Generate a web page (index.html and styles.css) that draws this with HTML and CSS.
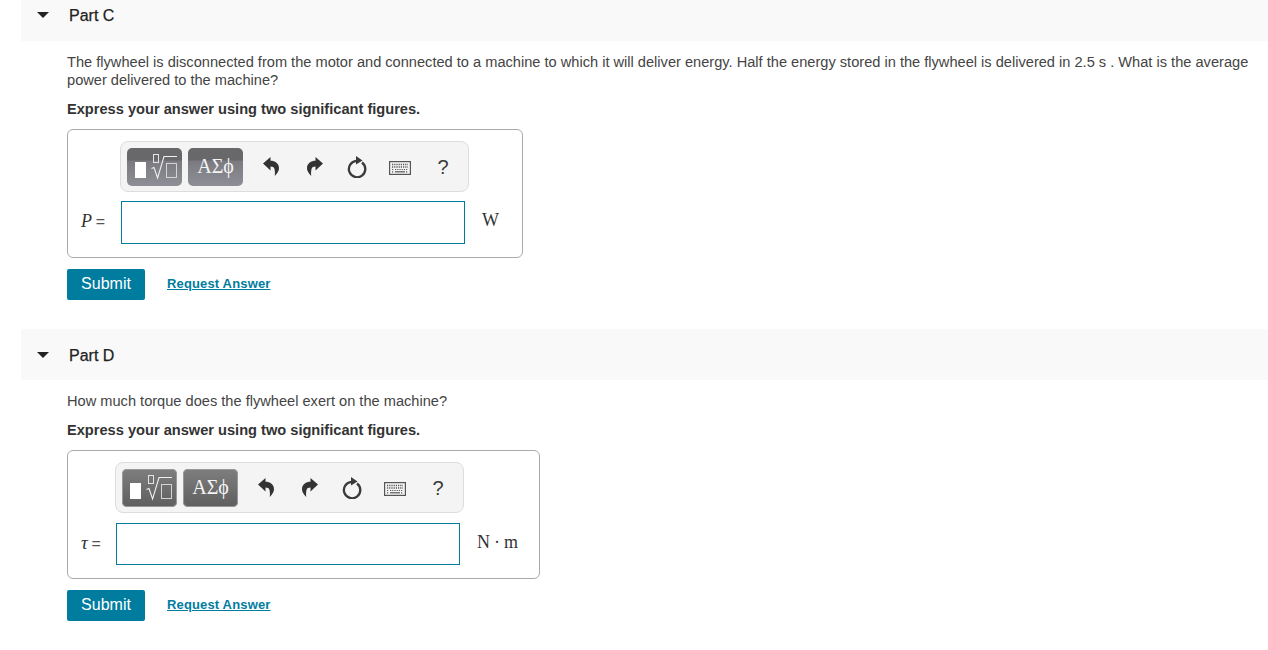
FILE: index.html
```html
<!DOCTYPE html>
<html lang="en">
<head>
<meta charset="utf-8">
<title>Part C and Part D</title>
<link rel="stylesheet" href="styles.css">
</head>
<body>
<svg class="sprite" xmlns="http://www.w3.org/2000/svg">
  <symbol id="i-templates" viewBox="0 0 55 38">
    <rect x="8" y="14" width="11" height="16" fill="#fff"/>
    <rect x="26.500" y="6.500" width="5" height="8" fill="none" stroke="#e4e4e4" stroke-width="1"/>
    <path d="M24.500 20.500l2.500-1 3.600 10.500L37 8.500h13" fill="none" stroke="#f0f0f0" stroke-width="1.100"/>
    <rect x="39.500" y="15.500" width="10" height="14" fill="none" stroke="#d4d4d4" stroke-width="1"/>
  </symbol>
  <symbol id="i-undo" viewBox="0 0 16 19">
    <path d="M7.500 0L0 6.500 7.500 13.500V9.500C9.500 9.500 11 10.200 11.500 12 12 14 12 17 11.800 19 14.800 16 16 13.500 16 11 16 6.500 12 3.800 7.500 3.800Z" fill="#333"/>
  </symbol>
  <symbol id="i-redo" viewBox="0 0 16 19">
    <path d="M8.500 0L16 6.500 8.500 13.500V9.500C6.500 9.500 5 10.200 4.500 12 4 14 4 17 4.200 19 1.200 16 0 13.500 0 11 0 6.500 4 3.800 8.500 3.800Z" fill="#333"/>
  </symbol>
  <symbol id="i-reload" viewBox="0 0 20 22">
    <path d="M9.500 4.900A8.200 8.200 0 1 0 15 6.500" fill="none" stroke="#3a3a3a" stroke-width="2.300"/>
    <path d="M9 0L15.500 4.600 9 8.500Z" fill="#3a3a3a"/>
  </symbol>
  <symbol id="i-keyboard" viewBox="0 0 22 14">
    <rect x="0.600" y="0.600" width="20.800" height="12.800" fill="#f4f4f4" stroke="#555" stroke-width="1.200"/>
    <path d="M3 3.500h16M3 6h16" stroke="#555" stroke-width="1.300" stroke-dasharray="1.200 1" fill="none"/>
    <path d="M3 8.500h2M17 8.500h2M3 10.800h2M17 10.800h2M6 8.500h10" stroke="#555" stroke-width="1.200" stroke-dasharray="1.200 1" fill="none"/>
    <path d="M6 10.800h10" stroke="#555" stroke-width="1.200" fill="none"/>
  </symbol>
</svg>

<main class="page">
  <section class="part">
    <header class="part-head part-head-first">
      <span class="caret"></span>
      <h2 class="part-title">Part C</h2>
    </header>
    <div class="part-body">
      <p class="prompt">The flywheel is disconnected from the motor and connected to a machine to which it will deliver energy. Half the energy stored in the flywheel is delivered in 2.5 s . What is the average power delivered to the machine?</p>
      <p class="hint">Express your answer using two significant figures.</p>
      <div class="answer-box answer-box-c">
        <div class="toolbar">
          <button class="tool-btn tool-btn-split" type="button"><svg class="tool-art"><use href="#i-templates"/></svg></button>
          <button class="tool-btn tool-btn-split tool-greek" type="button">ΑΣϕ</button>
          <span class="tool-slot tool-slot-first"><svg class="ic-arrow"><use href="#i-undo"/></svg></span>
          <span class="tool-slot"><svg class="ic-arrow ic-redo"><use href="#i-redo"/></svg></span>
          <span class="tool-slot"><svg class="ic-reload"><use href="#i-reload"/></svg></span>
          <span class="tool-slot"><svg class="ic-keyboard"><use href="#i-keyboard"/></svg></span>
          <span class="tool-slot tool-help">?</span>
        </div>
        <label class="var-label"><i class="var">P</i> <span class="eq">=</span></label>
        <input class="answer-input" type="text" aria-label="P">
        <span class="unit unit-w">W</span>
      </div>
      <div class="actions">
        <button class="submit" type="button">Submit</button>
        <a class="request" href="#">Request Answer</a>
      </div>
    </div>
  </section>

  <section class="part part-next">
    <header class="part-head">
      <span class="caret"></span>
      <h2 class="part-title">Part D</h2>
    </header>
    <div class="part-body">
      <p class="prompt">How much torque does the flywheel exert on the machine?</p>
      <p class="hint">Express your answer using two significant figures.</p>
      <div class="answer-box answer-box-d">
        <div class="toolbar">
          <button class="tool-btn tool-btn-soft" type="button"><svg class="tool-art"><use href="#i-templates"/></svg></button>
          <button class="tool-btn tool-btn-soft tool-greek" type="button">ΑΣϕ</button>
          <span class="tool-slot tool-slot-first"><svg class="ic-arrow"><use href="#i-undo"/></svg></span>
          <span class="tool-slot"><svg class="ic-arrow ic-redo"><use href="#i-redo"/></svg></span>
          <span class="tool-slot"><svg class="ic-reload"><use href="#i-reload"/></svg></span>
          <span class="tool-slot"><svg class="ic-keyboard"><use href="#i-keyboard"/></svg></span>
          <span class="tool-slot tool-help">?</span>
        </div>
        <label class="var-label"><i class="var var-tau">τ</i> <span class="eq">=</span></label>
        <input class="answer-input" type="text" aria-label="tau">
        <span class="unit unit-nm">N<span class="unit-dot">·</span>m</span>
      </div>
      <div class="actions">
        <button class="submit" type="button">Submit</button>
        <a class="request" href="#">Request Answer</a>
      </div>
    </div>
  </section>
</main>
</body>
</html>
```

FILE: styles.css
```css
* { box-sizing: border-box; }

html, body {
  margin: 0;
  background: #fff;
}

body {
  font-family: "Liberation Sans", Arial, sans-serif;
  font-size: 14.62px;
  color: #333;
  overflow: hidden;
}

.sprite { display: none; }

.page { padding-left: 21px; }

.part-next { margin-top: 29px; }

.part-head {
  display: flex;
  align-items: center;
  height: 51px;
  background: #f9f9f9;
  padding-left: 16px;
}

.part-head-first {
  height: 41px;
  padding-bottom: 11px;
}

.caret {
  width: 0;
  height: 0;
  border-left: 6px solid transparent;
  border-right: 6px solid transparent;
  border-top: 6px solid #222;
}

.part-title {
  margin: 0 0 0 20px;
  padding-top: 2px;
  font-size: 16px;
  font-weight: 400;
  color: #222;
  -webkit-text-stroke: 0.25px #222;
}

.part-body { padding-left: 46px; }

.prompt {
  margin: 12px 10px 0 0;
  line-height: 18px;
  color: #444;
}

.hint {
  margin: 11px 0 0;
  line-height: 18px;
  font-weight: 700;
  color: #333;
}

.answer-box {
  display: grid;
  grid-template-columns: auto auto auto;
  align-items: center;
  width: fit-content;
  height: 129px;
  margin-top: 11px;
  padding: 11px 0 13px 13px;
  border: 1px solid #aaa;
  border-radius: 6px;
}

.answer-box-c { grid-template-rows: 51px 43px; row-gap: 9px; }
.answer-box-d { grid-template-rows: 51px 42px; row-gap: 10px; }

.toolbar {
  grid-column: 2 / 4;
  display: flex;
  align-items: center;
  justify-self: start;
  width: 349px;
  height: 51px;
  margin-left: -1px;
  padding-left: 6px;
  background: #f4f4f4;
  border: 1px solid #ddd;
  border-radius: 8px;
}

.tool-btn {
  width: 55px;
  height: 38px;
  margin-right: 6px;
  padding: 0;
  border: 0;
  border-radius: 5px;
  color: #fff;
  flex: none;
}

.tool-btn:nth-child(2) { margin-right: 0; }

.tool-btn-split {
  background: linear-gradient(#68686a 0 32%, #7a7a80 34%, #8e8e96 100%);
}

.tool-btn-soft {
  background: linear-gradient(#7e7e7e, #5f5f5f);
  box-shadow: 0 0 0 1px #999 inset;
}

.tool-art {
  display: block;
  width: 55px;
  height: 38px;
}

.tool-greek {
  padding-bottom: 1px;
  font-family: "Liberation Serif", "DejaVu Serif", serif;
  font-size: 20px;
  color: #f4f4f4;
}

.tool-slot {
  flex: none;
  display: flex;
  align-items: center;
  justify-content: center;
  width: 43px;
  height: 24px;
}

.tool-slot-first { margin-left: 6.500px; }

.ic-arrow { width: 16px; height: 19px; }
.ic-redo { margin-left: 2px; }
.ic-reload { width: 20px; height: 22px; }
.ic-keyboard { width: 22px; height: 14px; margin-top: 3px; }

.tool-help {
  padding-top: 1px;
  font-size: 20px;
  color: #3a3a3a;
}

.var-label {
  grid-row: 2;
  grid-column: 1;
  margin-top: -3px;
  font-family: "Liberation Serif", "DejaVu Serif", serif;
  color: #333;
  white-space: nowrap;
}

.answer-box-c .var-label { width: 40px; }
.answer-box-d .var-label { width: 35px; }

.var { font-size: 18px; }
.var-tau { font-size: 19px; }

.eq {
  font-family: "Liberation Sans", Arial, sans-serif;
  font-size: 16px;
  color: #555;
}

.answer-input {
  grid-row: 2;
  grid-column: 2;
  display: block;
  width: 344px;
  height: 100%;
  padding: 0 6px;
  background: #fff;
  border: 1px solid #007c9f;
  border-radius: 0;
  outline: 0;
}

.unit {
  grid-row: 2;
  grid-column: 3;
  padding-left: 17px;
  margin-top: -4px;
  font-family: "Liberation Serif", "DejaVu Serif", serif;
  font-size: 18px;
  color: #333;
}

.unit-w { padding-right: 23px; }
.unit-nm { padding-right: 21px; }
.unit-dot { margin: 0 4px; }

.actions {
  display: flex;
  align-items: center;
  margin-top: 11px;
}

.submit {
  width: 78px;
  height: 31px;
  padding: 0 0 2px;
  background: #007c9f;
  border: 0;
  border-radius: 2px;
  font-family: "Liberation Sans", Arial, sans-serif;
  font-size: 16px;
  color: #fff;
}

.request {
  margin: 0 0 2px 22px;
  font-size: 13px;
  font-weight: 700;
  letter-spacing: 0.15px;
  color: #007c9f;
}
```
